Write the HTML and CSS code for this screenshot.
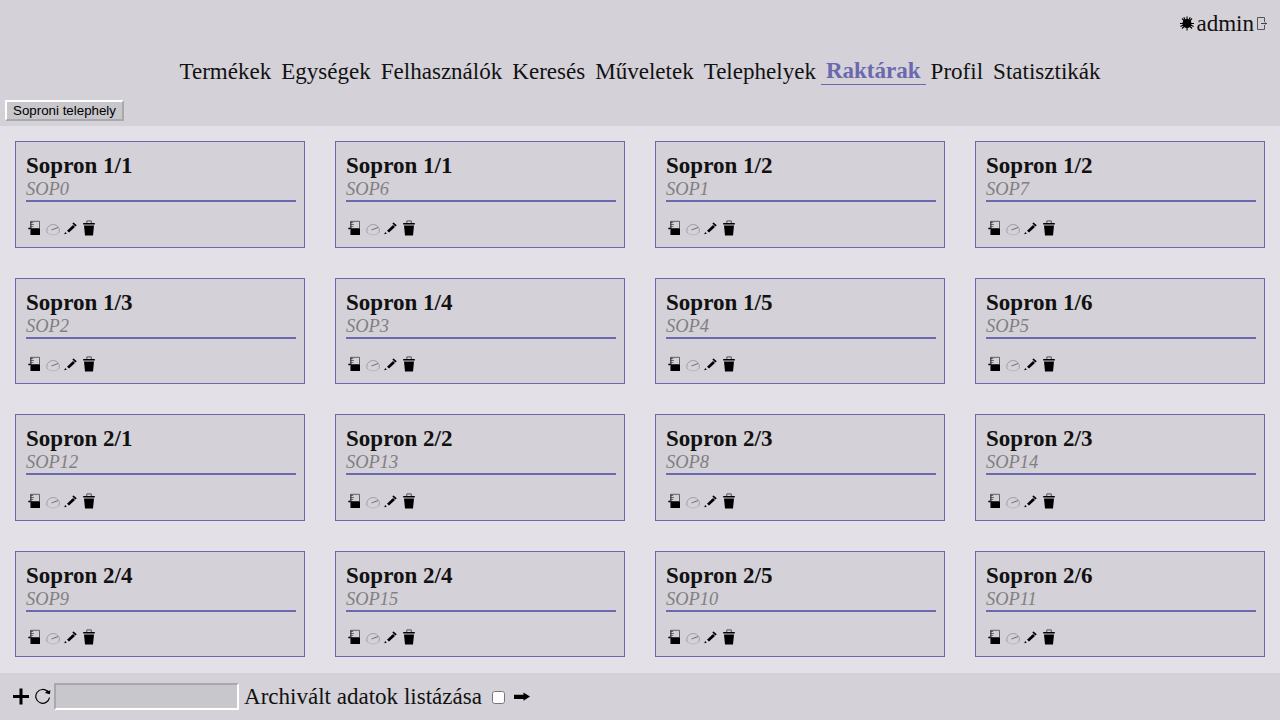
FILE: index.html
```html
<!DOCTYPE html>
<html lang="hu">
<head>
<meta charset="utf-8">
<title>Raktárak</title>
<link rel="stylesheet" href="styles.css">
</head>
<body>
<svg class="defs" aria-hidden="true">
  <symbol id="store" viewBox="0 0 16 16"><path d="M4 8V1.300h8.500V8" fill="none" stroke="#555" stroke-width=".9"/><path d="M3.700 8.300h9.300v6.700H3.700zM1.300 7.800h3v1.400h-3z"/><path d="M3 2.500h3.300M3 4.500h4M3 6.500h3.300" stroke="#444" stroke-width=".7"/><path d="M3.700 1v14" stroke="#333" stroke-width=".7"/></symbol>
  <symbol id="gauge" viewBox="0 0 16 16"><path d="M2.500 13A6.300 5.800 0 1 1 13.700 13" fill="none" stroke="#888" stroke-width=".7"/><path d="M2.500 13Q8 17 13.700 13" fill="none" stroke="#aaa" stroke-width=".6"/><path d="M6.500 10L13 7.500" fill="none" stroke="#555" stroke-width=".8"/></symbol>
  <symbol id="pencil" viewBox="0 0 16 16"><path d="M4 10.700L10 5l2 2L6 12.600zM10.400 4.500L9.300 3.300l1.300-.9 3.200 2.900-1.500 1.300zM1.300 14.200l.8-2.200 1.700 1.700z"/></symbol>
  <symbol id="trash" viewBox="0 0 16 16"><path d="M2.200 3h11.600v1.500H2.200zM3 5.400h10l-1 10.100H4z"/><path d="M5.800 3V.9h4.500V3" fill="none" stroke="#444" stroke-width=".9"/></symbol>
</svg>
<header class="top">
  <div class="user">
    <svg class="sun" viewBox="0 0 16 16"><circle cx="8" cy="7.500" r="4.500"/><path d="M8 .5v14M1 7.500h14M3 2.500l10 10M13 2.500l-10 10M4.800 1.300l2 4M11.200 1.300l-2 4M14.600 10.600l-4-2M1.400 10.600l4-2" stroke="#000" stroke-width="1.100"/></svg>
    <span class="login">admin</span>
    <svg class="exit" viewBox="0 0 12 16"><path d="M8.500 6V1.500h-7v12h7V9" fill="none" stroke="#555"/><path d="M5 7.500H11M9.500 6.500v2" fill="none" stroke="#444"/></svg>
  </div>
  <nav class="nav">
    <a>Termékek</a><a>Egységek</a><a>Felhasználók</a><a>Keresés</a><a>Műveletek</a><a>Telephelyek</a><a class="active">Raktárak</a><a>Profil</a><a>Statisztikák</a>
  </nav>
  <button class="site">Soproni telephely</button>
</header>
<main class="grid" id="grid"></main>
<footer class="bottom">
  <svg class="plus" viewBox="0 -.5 16 17"><path d="M6.500 0h3v6.500H16v3H9.500V16h-3V9.500H0v-3h6.500z"/></svg>
  <svg class="reload" viewBox="0 0 16 16"><path d="M12.700 3.600A6.900 6.900 0 1 0 14.500 9.500" fill="none" stroke="#000" stroke-width="1.200"/><path d="M10 5l4.900 1.200.5-4-1.800.8-1-.9z"/></svg>
  <input class="search" type="text">
  <label class="label" for="archived">Archivált adatok listázása</label>
  <input class="check" id="archived" type="checkbox">
  <svg class="arrow" viewBox="0 0 16 10"><path d="M0 2.700h9.500V.6L16 4.600 9.500 8.800V7H0z"/></svg>
</footer>
<script src="app.js"></script>
</body>
</html>
```
FILE: styles.css
```css
* { box-sizing: border-box; }
body {
  margin: 0;
  height: 720px;
  overflow: hidden;
  display: flex;
  flex-direction: column;
  background: #e3e0e7;
  color: #111;
  font: 23.040px/26px "Liberation Serif", serif;
}
.defs { display: none; }
.top { height: 126px; flex: none; background: #d4d1d8; }
.user {
  display: flex;
  justify-content: flex-end;
  align-items: center;
  height: 47px;
  padding-right: 12px;
}
.sun { width: 16px; height: 16px; margin-right: 1.500px; }
.login { margin-top: -2px; }
.exit { width: 12px; height: 16px; margin-left: 2px; }
.nav { display: flex; justify-content: center; height: 53px; padding-top: 11px; }
.nav a { padding: 0 5px; height: 27px; line-height: 27px; }
.nav .active { color: #6a68ae; font-weight: bold; border-bottom: 1px solid #6a68ae; line-height: 25px; }
.site {
  display: block;
  width: 119px;
  height: 21px;
  margin-left: 5px;
  padding: 0;
  border: 2px solid;
  border-color: #fff #a9a8ac #a9a8ac #fff;
  background: #c8c7cb;
  color: #000;
  font: 13.333px "Liberation Sans", sans-serif;
}
.grid {
  flex: none;
  height: 547px;
  padding: 15px;
  display: grid;
  grid-template-columns: repeat(4, 290px);
  grid-auto-rows: 106.600px;
  gap: 30px;
}
.card { border: 1px solid #6a68ae; background: #d4d1d8; padding: 10px 0 0 10px; }
.head { width: 270px; height: 50px; border-bottom: 2px solid #6a68ae; }
.name { margin: 0; font-size: 23.040px; line-height: 26px; }
.code { display: block; color: #808080; font-size: 18.432px; line-height: 23px; font-style: italic; }
.actions { display: flex; padding: 17.600px 0 0 1px; gap: 2px; }
.actions svg { width: 16px; height: 16px; }
.bottom { flex: none; height: 47px; display: flex; align-items: center; padding-left: 13px; background: #d4d1d8; }
.plus { width: 16px; height: 17px; margin-right: 6px; }
.reload { width: 16px; height: 16px; margin: -1px 3px 0 0; }
.search {
  width: 185px;
  height: 27px;
  margin: 0 5px 0 0;
  border: 2px solid;
  border-color: #a9a8ac #fff #fff #a9a8ac;
  background: #c8c7cb;
}
.label { margin-top: -2px; }
.check { width: 13px; height: 13px; margin: 2px 9px 0 10px; }
.arrow { width: 16px; height: 10px; }
```
FILE: app.js
```js
const stores = [
  ["1/1", 0], ["1/1", 6], ["1/2", 1], ["1/2", 7],
  ["1/3", 2], ["1/4", 3], ["1/5", 4], ["1/6", 5],
  ["2/1", 12], ["2/2", 13], ["2/3", 8], ["2/3", 14],
  ["2/4", 9], ["2/4", 15], ["2/5", 10], ["2/6", 11]
];
const icons = ["store", "gauge", "pencil", "trash"]
  .map(id => `<svg class="${id}"><use href="#${id}"/></svg>`).join("");
document.getElementById("grid").innerHTML = stores.map(([name, code]) => `
  <article class="card">
    <div class="head"><h2 class="name">Sopron ${name}</h2><span class="code">SOP${code}</span></div>
    <div class="actions">${icons}</div>
  </article>`).join("");
```
